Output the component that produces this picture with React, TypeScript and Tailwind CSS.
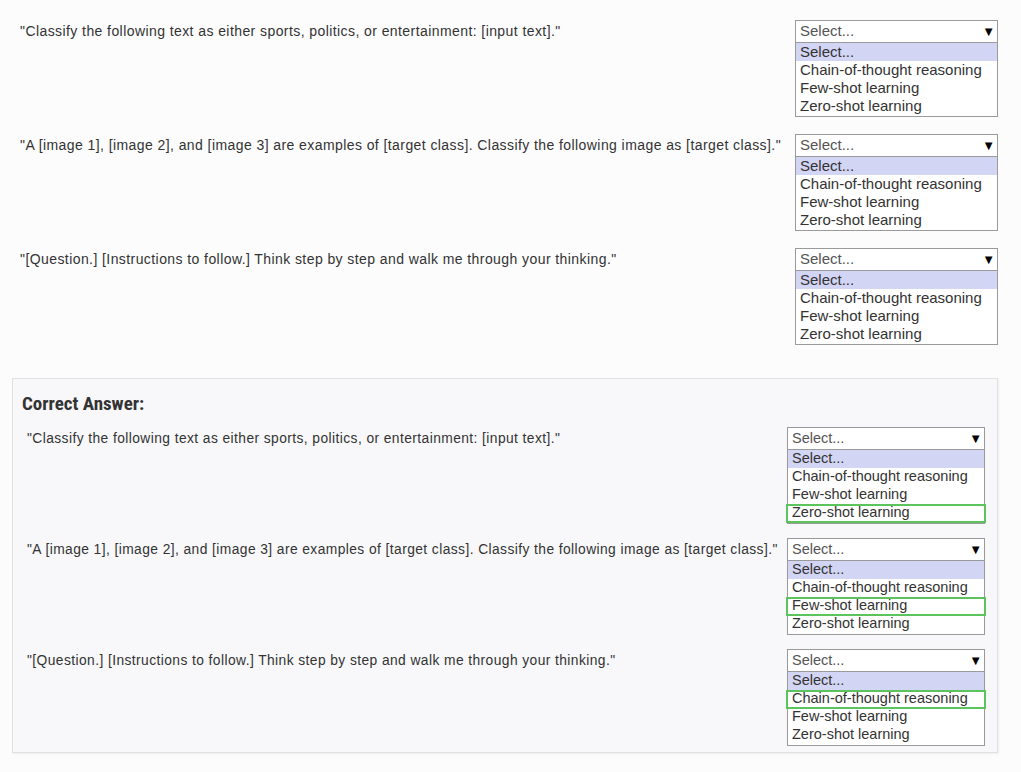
import React from "react";

const OPTIONS = ["Select...", "Chain-of-thought reasoning", "Few-shot learning", "Zero-shot learning"];

function FakeSelect({ width, size, correct }: { width: number; size: "lg" | "sm"; correct?: number }) {
  const fs = size === "lg" ? "text-[15px]" : "text-[14.5px]";
  return (
    <div className="flex flex-col" style={{ width }}>
      <div className={`flex h-[23px] items-center justify-between border border-[#9a9a9a] bg-white pl-[4px] pr-[2px] ${fs} text-[#555]`}>
        <span>Select...</span>
        <span className="text-[13px] leading-none text-black">▼</span>
      </div>
      <div className="flex flex-col border border-t-0 border-[#9a9a9a] bg-white pb-[1px]">
        {OPTIONS.map((o, i) => (
          <div
            key={o}
            className={`${fs} relative h-[18px] pl-[4px] leading-[17px] text-[#333] ${
              i === 0 ? "bg-[#d3d5f4]" : ""
            }`}
          >
            {correct === i && (
              <div className="absolute -left-[2px] -right-[2px] top-0 h-[19px] border-2 border-[#5cc45c]" />
            )}
            <span className="relative">{o}</span>
          </div>
        ))}
      </div>
    </div>
  );
}

const QUESTIONS = [
  { q: "\"Classify the following text as either sports, politics, or entertainment: [input text].\"", a: 3 },
  { q: "\"A [image 1], [image 2], and [image 3] are examples of [target class]. Classify the following image as [target class].\"", a: 2 },
  { q: "\"[Question.] [Instructions to follow.] Think step by step and walk me through your thinking.\"", a: 1 },
];

export default function App() {
  return (
    <div
      className="min-h-[772px] w-[1021px] bg-[#fcfcfd] text-[#333]"
      style={{ fontFamily: '"Liberation Sans", Arial, sans-serif' }}
    >
      <div className="flex flex-col gap-[17px] pt-[20px]">
        {QUESTIONS.map((item) => (
          <div key={item.q} className="flex items-start">
            <div className="pl-[20px] text-[14px] leading-[23px] tracking-[0.42px]">{item.q}</div>
            <div className="ml-auto mr-[23px]">
              <FakeSelect width={203} size="lg" />
            </div>
          </div>
        ))}
      </div>

      <div className="ml-[12px] mt-[33px] flex h-[375px] w-[986px] flex-col border border-[#e0e1e4] bg-[#f8f8fa] shadow-[1px_1px_2px_rgba(0,0,0,0.06)]">
        <div
          className="pl-[9px] pt-[13px] text-[19px] font-bold leading-[24px] text-[#333]"
          style={{ fontFamily: '"Liberation Sans Narrow", "Roboto Condensed", "Arial Narrow", "Liberation Sans", sans-serif' }}
        >
          Correct Answer:
        </div>
        <div className="mt-[11px] flex flex-col gap-[14px]">
          {QUESTIONS.map((item) => (
            <div key={item.q} className="flex items-start">
              <div className="pl-[14px] text-[13.8px] leading-[23px] tracking-[0.42px]">{item.q}</div>
              <div className="ml-auto mr-[12px]">
                <FakeSelect width={198} size="sm" correct={item.a} />
              </div>
            </div>
          ))}
        </div>
      </div>
    </div>
  );
}
